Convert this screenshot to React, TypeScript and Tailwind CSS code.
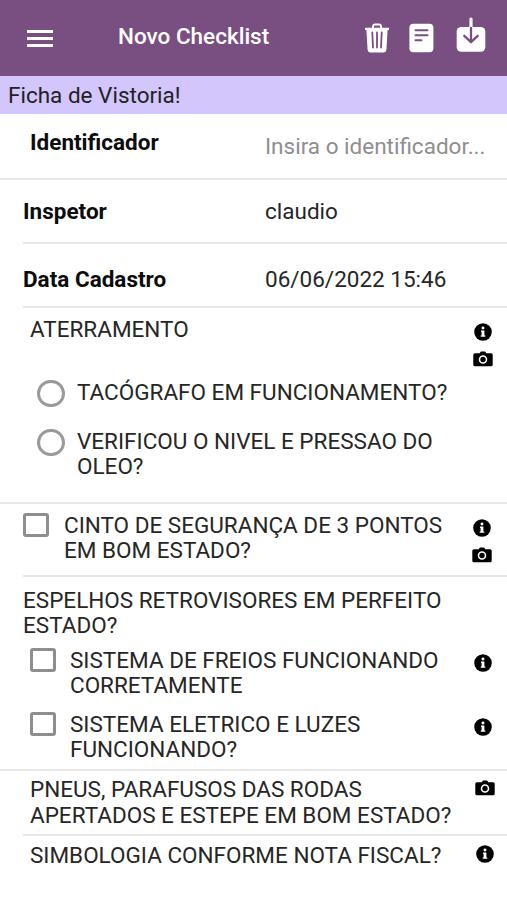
import type { ReactNode } from "react";

function InfoIcon() {
  return (
    <svg viewBox="0 0 512 512" className="block h-[18px] w-[18px]" fill="#000">
      <circle cx="256" cy="256" r="250" />
      <path
        fill="#fff"
        d="M256 102a42 42 0 1 0 0 84a42 42 0 1 0 0-84zM200 212h96v140h26v42H190v-42h26v-98h-16z"
      />
    </svg>
  );
}

function CameraIcon() {
  return (
    <svg viewBox="0 0 20 16" className="block h-4 w-5" fill="#000">
      <path d="M6.800 2.200L7.300 1.200Q7.600.4 8.400.4h3.200q.8 0 1.100.8l.5 1h4.900q1.600 0 1.600 1.600v10q0 1.500-1.600 1.500H1.900Q.3 15.300.3 13.800v-10Q.3 2.200 1.900 2.200z" />
      <circle cx="10" cy="8.500" r="3.500" fill="none" stroke="#fff" strokeWidth="1.600" />
    </svg>
  );
}

function Header() {
  return (
    <header className="flex h-[76px] items-center bg-[#794f82] pb-px text-white">
      <div className="ml-[27px] flex w-[26px] flex-col gap-[4px] pt-[2px]">
        <span className="h-[3px] bg-white" />
        <span className="h-[3px] bg-white" />
        <span className="h-[3px] bg-white" />
      </div>
      <h1 className="ml-[65px] w-[246px] whitespace-nowrap pb-[3px] text-[22.5px] font-medium leading-[26px]">
        Novo Checklist
      </h1>
      <svg viewBox="0 0 26 30" className="mt-px h-[30px] w-[26px] shrink-0">
        <path
          d="M9 5V3.600Q9 1.600 11 1.600h4Q17 1.600 17 3.600V5"
          fill="none"
          stroke="#fff"
          strokeWidth="2"
        />
        <path
          fill="#fff"
          d="M1 4.700H25V7H23.600L22.400 27Q22.200 29.400 19.800 29.400H6.200Q3.800 29.400 3.600 27L2.400 7H1z"
        />
        <path
          d="M8.300 9.500L9 24.500M13 9.500V24.500M17.700 9.500L17 24.500"
          stroke="#794f82"
          strokeWidth="1.800"
          strokeLinecap="round"
        />
      </svg>
      <svg viewBox="0 0 25 30" className="ml-[19px] mt-px h-[30px] w-[25px] shrink-0">
        <rect x=".4" y=".8" width="24" height="28.400" rx="4" fill="#fff" />
        <path
          d="M6.500 7.200H18.500M6.500 12.200H18.500M6.500 17.200H12.500"
          stroke="#794f82"
          strokeWidth="2"
          strokeLinecap="round"
        />
      </svg>
      <svg viewBox="0 0 30 36" className="ml-[22px] mb-[5px] h-[36px] w-[30px] shrink-0">
        <rect x=".7" y="10" width="28.600" height="24.800" rx="4.500" fill="#fff" />
        <path d="M15 11V2" stroke="#fff" strokeWidth="3.200" strokeLinecap="round" />
        <path
          d="M15 11V25M8.300 18.800L15 25.200L21.700 18.800"
          fill="none"
          stroke="#794f82"
          strokeWidth="2.300"
          strokeLinecap="round"
          strokeLinejoin="round"
        />
      </svg>
    </header>
  );
}

function Radio() {
  return <span className="h-[27px] w-7 shrink-0 rounded-full border-3 border-[#9a9a9a]" />;
}

function Checkbox() {
  return (
    <span className="h-6 w-[26px] shrink-0 rounded-[3px] border-3 border-[#8e8e8e]" />
  );
}

function Line({ children }: { children: ReactNode }) {
  return <span className="block whitespace-nowrap">{children}</span>;
}

export default function App() {
  return (
    <main className="h-[900px] w-[507px] overflow-hidden bg-white font-['Roboto','Liberation_Sans',sans-serif] text-[22.5px] leading-[25px] text-[#262626]">
      <Header />
      <div className="flex h-[38px] items-center bg-[#d3c6fc] pl-2 text-[#222]">
        <Line>Ficha de Vistoria!</Line>
      </div>

      <div className="flex h-[66px] border-b-2 border-[#e8e8e8]">
        <div className="w-[265px] pl-[30px] pt-4 font-bold text-[#0c0c0c]">
          <Line>Identificador</Line>
        </div>
        <div className="pt-5 text-[#8e8e8e]">
          <Line>Insira o identificador...</Line>
        </div>
      </div>
      <div className="ml-[23px] flex h-16 items-center border-b-2 border-[#e8e8e8] pt-px">
        <div className="w-[242px] font-bold text-[#0c0c0c]">
          <Line>Inspetor</Line>
        </div>
        <Line>claudio</Line>
      </div>
      <div className="ml-[23px] flex h-16 border-b-2 border-[#e8e8e8] pt-[23px]">
        <div className="w-[242px] font-bold text-[#0c0c0c]">
          <Line>Data Cadastro</Line>
        </div>
        <Line>06/06/2022 15:46</Line>
      </div>

      <section className="flex h-[196px] border-b-2 border-[#e8e8e8]">
        <div className="w-[473px] pl-[30px] pt-[9px]">
          <Line>ATERRAMENTO</Line>
          <div className="ml-[7px] mt-[38px] flex gap-3">
            <Radio />
            <Line>TACÓGRAFO EM FUNCIONAMENTO?</Line>
          </div>
          <div className="ml-[7px] mt-[22px] flex gap-3">
            <Radio />
            <div>
              <Line>VERIFICOU O NIVEL E PRESSAO DO</Line>
              <Line>OLEO?</Line>
            </div>
          </div>
        </div>
        <div className="flex flex-col items-center gap-[10px] pt-[15px]">
          <InfoIcon />
          <CameraIcon />
        </div>
      </section>

      <section className="ml-[23px] flex h-[73px] border-b-2 border-[#e8e8e8] pt-[9px]">
        <Checkbox />
        <div className="ml-[15px] w-[408px]">
          <Line>CINTO DE SEGURANÇA DE 3 PONTOS</Line>
          <Line>EM BOM ESTADO?</Line>
        </div>
        <div className="flex flex-col items-center gap-[10px] pt-[6px]">
          <InfoIcon />
          <CameraIcon />
        </div>
      </section>

      <section className="h-[194px] border-b-2 border-[#e8e8e8] pl-[23px] pt-[11px]">
        <Line>ESPELHOS RETROVISORES EM PERFEITO</Line>
        <Line>ESTADO?</Line>
        <div className="ml-[7px] mt-[10px] flex">
          <Checkbox />
          <div className="ml-[14px] w-[404px]">
            <Line>SISTEMA DE FREIOS FUNCIONANDO</Line>
            <Line>CORRETAMENTE</Line>
          </div>
          <div className="pt-[6px]">
            <InfoIcon />
          </div>
        </div>
        <div className="ml-[7px] mt-[14px] flex">
          <Checkbox />
          <div className="ml-[14px] w-[404px]">
            <Line>SISTEMA ELETRICO E LUZES</Line>
            <Line>FUNCIONANDO?</Line>
          </div>
          <div className="pt-[6px]">
            <InfoIcon />
          </div>
        </div>
      </section>

      <section className="ml-[23px] flex h-[65px] border-b-2 border-[#e8e8e8] pl-[7px] pt-[6px]">
        <div className="w-[445px] leading-[25.5px]">
          <Line>PNEUS, PARAFUSOS DAS RODAS</Line>
          <Line>APERTADOS E ESTEPE EM BOM ESTADO?</Line>
        </div>
        <div className="pt-[3px]">
          <CameraIcon />
        </div>
      </section>

      <section className="flex pl-[30px] pt-[7px]">
        <div className="w-[446px]">
          <Line>SIMBOLOGIA CONFORME NOTA FISCAL?</Line>
        </div>
        <div className="pt-[2px]">
          <InfoIcon />
        </div>
      </section>
    </main>
  );
}
